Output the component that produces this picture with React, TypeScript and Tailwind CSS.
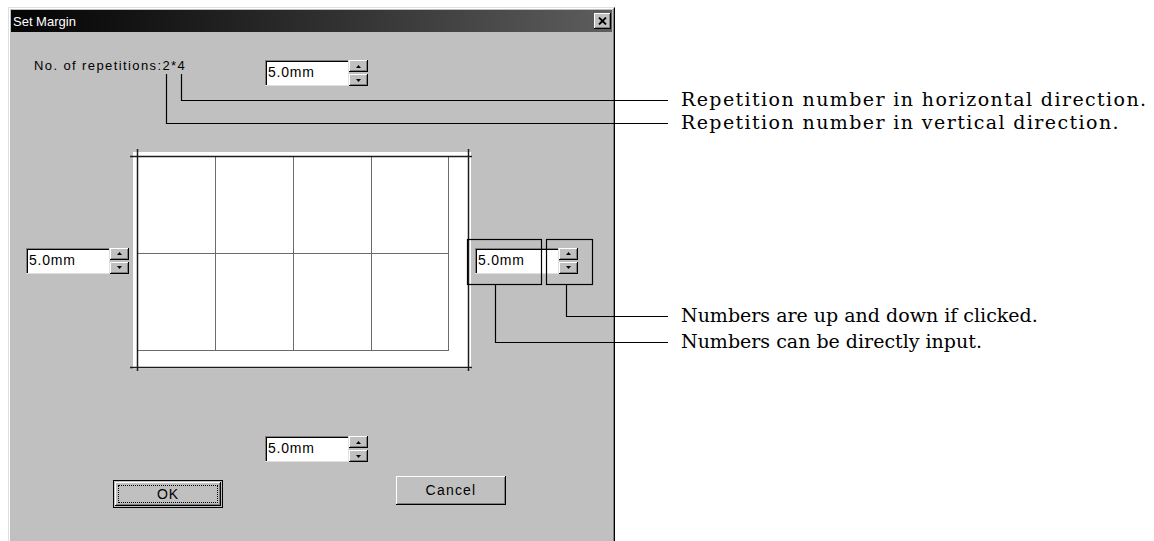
import React from "react"

const ui = { fontFamily: '"Liberation Sans", Arial, sans-serif' }
const serif = { fontFamily: '"DejaVu Serif", "Liberation Serif", serif' }

function Arrow({ up }: { up?: boolean }) {
  return (
    <svg width="5" height="3" viewBox="0 0 5 3">
      <polygon points={up ? "2.5,0 5,3 0,3" : "0,0 5,0 2.5,3"} fill="#000" />
    </svg>
  )
}

function SpinBtn({ up }: { up?: boolean }) {
  return (
    <div className="flex h-[12px] w-[19px] items-center justify-center bg-[#c0c0c0] shadow-[inset_-1px_-1px_#000,inset_1px_1px_#fff,inset_-2px_-2px_#808080]">
      <Arrow up={up} />
    </div>
  )
}

function Spinner() {
  return (
    <div className="flex h-[26px] shrink-0 items-stretch">
      <div
        className="flex w-[84px] items-center border-b border-r border-[#dfdfdf] bg-white pl-[3px] text-[14px] tracking-[0.8px] text-black shadow-[inset_1px_1px_#808080,inset_2px_2px_#000]"
        style={ui}
      >
        5.0mm
      </div>
      <div className="flex flex-col justify-between">
        <SpinBtn up />
        <SpinBtn />
      </div>
    </div>
  )
}

// the page preview with grid cells and margin lines
function Preview() {
  const cols = [4.5, 82.5, 160.5, 238.5, 315.5]
  const rows = [4.5, 101.5, 198.5]
  return (
    <div className="ml-[4px] h-[217px] w-[338px] shrink-0 bg-white">
      <svg width="338" height="217" className="overflow-visible">
        {cols.map((x) => (
          <line key={"c" + x} x1={x} y1={4} x2={x} y2={199} stroke="#6b6b6b" strokeWidth="1" />
        ))}
        {rows.map((y) => (
          <line key={"r" + y} x1={4} y1={y} x2={316} y2={y} stroke="#6b6b6b" strokeWidth="1" />
        ))}
        <line x1={4.5} y1={-3} x2={4.5} y2={219} stroke="#1c1c1c" strokeWidth="1.5" />
        <line x1={335.5} y1={-3} x2={335.5} y2={219} stroke="#1c1c1c" strokeWidth="1.5" />
        <line x1={-3} y1={4.5} x2={339} y2={4.5} stroke="#1c1c1c" strokeWidth="1.5" />
        <line x1={-3} y1={215.5} x2={339} y2={215.5} stroke="#1c1c1c" strokeWidth="1.5" />
      </svg>
    </div>
  )
}

export default function App() {
  return (
    <div className="relative flex h-[541px] w-[1154px] items-start overflow-hidden bg-white">
      {/* dialog */}
      <div className="ml-2 mt-[7px] h-[540px] w-[607px] shrink-0 border-l border-t border-r border-[#dfdfdf] border-r-black bg-[#c0c0c0]">
        <div className="h-full border-l border-t border-r border-white border-r-[#808080] p-px">
          <div className="flex h-[22px] items-center justify-between bg-linear-to-r from-[#050505] to-[#5e5e5e] pl-[2px] pr-px">
            <span className="text-[13px] leading-none text-white" style={ui}>
              Set Margin
            </span>
            <div className="flex h-[16px] w-[17px] items-center justify-center bg-[#c0c0c0] shadow-[inset_-1px_-1px_#000,inset_1px_1px_#fff,inset_-2px_-2px_#808080]">
              <svg width="9" height="8" viewBox="0 0 9 8">
                <path d="M1 0.5 L8 7.5 M8 0.5 L1 7.5" stroke="#000" strokeWidth="1.8" />
              </svg>
            </div>
          </div>

          <div className="mt-[28px] flex items-start">
            <div className="-mt-px ml-[23px] w-[231px] whitespace-nowrap text-[13px] leading-[14px] tracking-[1.4px] text-black" style={ui}>
              No. of repetitions:2*4
            </div>
            <Spinner />
          </div>

          <div className="mt-[66px] flex h-[217px] items-center">
            <div className="ml-[15px]">
              <Spinner />
            </div>
            <Preview />
            <div className="ml-[4px]">
              <Spinner />
            </div>
          </div>

          <div className="ml-[254px] mt-[67px] flex">
            <Spinner />
          </div>

          <div className="mt-[14px] flex items-start">
            <div className="ml-[102px] mt-[4px] h-[28px] w-[110px] border border-black bg-[#c0c0c0] p-px">
              <div className="flex h-full w-full items-center justify-center p-[3px] shadow-[inset_-1px_-1px_#000,inset_1px_1px_#fff,inset_-2px_-2px_#808080]">
                <div className="flex h-full w-full items-center justify-center border border-dotted border-black text-[14px] tracking-[1px] text-black" style={ui}>
                  OK
                </div>
              </div>
            </div>
            <div
              className="ml-[173px] flex h-[29px] w-[110px] items-center justify-center bg-[#c0c0c0] text-[14px] tracking-[1.2px] text-black shadow-[inset_-1px_-1px_#000,inset_1px_1px_#fff,inset_-2px_-2px_#808080]"
              style={ui}
            >
              Cancel
            </div>
          </div>
        </div>
      </div>

      {/* annotation texts */}
      <div className="ml-[66px] flex flex-col text-[19px] leading-[23px] text-black" style={serif}>
        <div className="mt-[88px] whitespace-nowrap tracking-[1.4px]">Repetition number in horizontal direction.</div>
        <div className="whitespace-nowrap tracking-[1.4px]">Repetition number in vertical direction.</div>
        <div className="mt-[170px] whitespace-nowrap">Numbers are up and down if clicked.</div>
        <div className="mt-[3px] whitespace-nowrap">Numbers can be directly input.</div>
      </div>

      {/* callout lines over the dialog */}
      <svg className="pointer-events-none absolute left-0 top-0" width="1154" height="541">
        <g stroke="#000" strokeWidth="1.2" fill="none">
          <polyline points="181.5,74 181.5,100.5 668,100.5" />
          <polyline points="166.5,74 166.5,123.5 668,123.5" />
          <rect x="467.5" y="239.5" width="74" height="45" />
          <rect x="546.5" y="239.5" width="46" height="45" />
          <polyline points="566.5,285 566.5,316.5 668,316.5" />
          <polyline points="495.5,285 495.5,342.5 668,342.5" />
        </g>
      </svg>
    </div>
  )
}
